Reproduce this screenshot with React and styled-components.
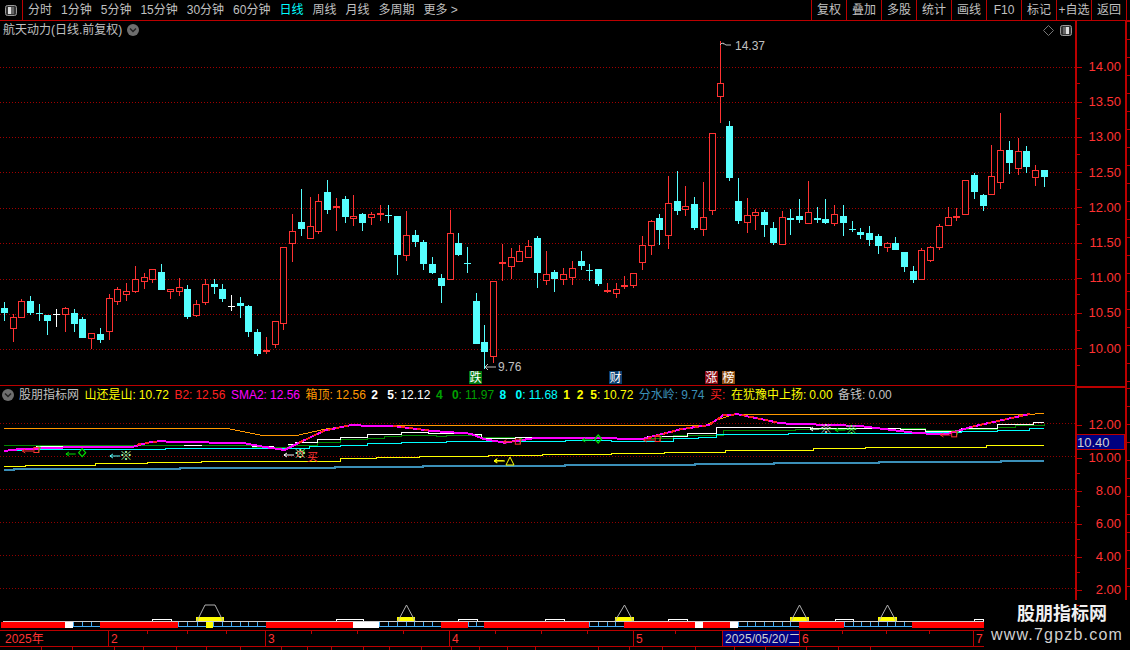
import styled, { createGlobalStyle } from "styled-components";

const FONT = `"Liberation Sans", "Noto Sans CJK SC", sans-serif`;
const RED = "#ff3232";
const LINE = "#bb0000";
const CYAN = "#55ffff";

const GlobalStyle = createGlobalStyle`
  html, body {
    margin: 0;
    background: #000;
    overflow: hidden;
  }
`;

const Page = styled.div`
  width: 1130px;
  height: 650px;
  display: flex;
  flex-direction: column;
  background: #000;
  color: #c0c0c0;
  font: 12px/1 ${FONT};
`;

//-------------Toolbar--------------
const Toolbar = styled.header`
  height: 20px;
  flex: none;
  display: flex;
  align-items: stretch;
  border-bottom: 1px solid ${LINE};
`;

const ToggleCell = styled.div`
  width: 22px;
  display: flex;
  align-items: center;
  justify-content: center;
  border-right: 1px solid ${LINE};
`;

const Tabs = styled.nav`
  display: flex;
  align-items: center;
  gap: 9px;
  padding-left: 5px;
`;

const Tab = styled.span`
  color: ${(p) => (p.$active ? "#00ffff" : "#c0c0c0")};
`;

const ToolGroup = styled.div`
  margin-left: auto;
  margin-right: 3px;
  display: flex;
  border-right: 1px solid ${LINE};
`;

const ToolButton = styled.div`
  width: 35px;
  box-sizing: border-box;
  display: flex;
  align-items: center;
  justify-content: center;
  border-left: 1px solid ${LINE};
  white-space: nowrap;
`;

//-------------Panes--------------
const Body = styled.div`
  height: 579px;
  flex: none;
  display: flex;
`;

const Charts = styled.div`
  width: 1075px;
  flex: none;
  display: flex;
  flex-direction: column;
`;

const UpperPane = styled.section`
  height: 365px;
  flex: none;
  border-bottom: 1px solid ${LINE};
  box-sizing: border-box;
`;

const LowerPane = styled.section`
  height: 214px;
  flex: none;
`;

const TitleBar = styled.div`
  height: 18px;
  display: flex;
  align-items: center;
  gap: 5px;
  padding: 0 3px;
`;

const TitleTools = styled.div`
  margin-left: auto;
  display: flex;
  align-items: center;
  gap: 6px;
`;

const Canvas = styled.svg`
  display: block;
  font-family: ${FONT};
  font-size: 12px;
`;

const Legend = styled.div`
  height: 17px;
  display: flex;
  align-items: center;
  gap: 5.5px;
  padding-left: 1.5px;
  white-space: nowrap;
`;

const LegendItem = styled.span`
  color: ${(p) => p.$color};
`;

const LegendDigits = styled.b`
  word-spacing: ${(p) => p.$spacing}px;
`;

const LegendValue = styled.span`
  margin-left: 3px;
`;

//-------------Axis--------------
const Axes = styled.div`
  flex: 1;
  display: flex;
  flex-direction: column;
`;

const Axis = styled.div`
  position: relative;
  width: 52px;
  box-sizing: border-box;
  height: ${(p) => p.$height}px;
  padding-top: ${(p) => p.$pad}px;
  border-left: 2px solid ${LINE};
  border-right: 2px solid ${LINE};
  border-top: ${(p) => (p.$lined ? `2px solid ${LINE}` : "none")};

  &::after {
    content: "";
    position: absolute;
    top: 0;
    bottom: 0;
    left: 100%;
    margin-left: 2px;
    width: 3px;
    background: repeating-linear-gradient(to bottom, ${LINE} 0 1px, transparent 1px 18px);
  }
`;

const AxisRow = styled.div`
  position: relative;
  height: ${(p) => p.$height}px;
  display: flex;
  align-items: center;
  justify-content: flex-end;
  padding-right: 4px;
  color: ${RED};
  font-size: 13px;

  &::before {
    content: "";
    position: absolute;
    left: 0;
    top: 50%;
    width: 5px;
    height: 1px;
    background: ${LINE};
  }

  &::after {
    content: "";
    position: absolute;
    left: 0;
    bottom: 0;
    width: 3px;
    height: 1px;
    background: ${LINE};
  }
`;

const PriceTag = styled.div`
  position: absolute;
  left: 0;
  right: 0;
  top: 46px;
  height: 16px;
  box-sizing: border-box;
  display: flex;
  align-items: center;
  background: #000080;
  border: 1px solid ${LINE};
  border-left: none;
  color: #d0d0d0;
  font-size: 13px;
`;

//-------------Bottom--------------
const Bottom = styled.div`
  height: 50px;
  flex: none;
  display: flex;
`;

const BottomLeft = styled.div`
  width: 984px;
  flex: none;
`;

const TimeAxis = styled.div`
  position: relative;
  height: 17px;
  box-sizing: border-box;
  display: flex;
  border-top: 1px solid ${LINE};
  border-bottom: 1px solid ${LINE};
`;

const TimeCell = styled.div`
  width: ${(p) => p.$width}px;
  box-sizing: border-box;
  flex: none;
  display: flex;
  align-items: center;
  padding-left: ${(p) => (p.$first ? 5 : 2)}px;
  border-left: ${(p) => (p.$first ? "none" : `1px solid ${LINE}`)};
  color: ${(p) => (p.$active ? "#d0d0d0" : RED)};
  background: ${(p) => (p.$active ? "#000080" : "transparent")};
  white-space: nowrap;
  overflow: hidden;
`;

const TimeTicks = styled.svg`
  position: absolute;
  left: 0;
  top: 0;
`;

const FooterTabs = styled.div`
  height: 3px;
  display: flex;
`;

const FooterTab = styled.div`
  width: ${(p) => p.$width}px;
  flex: none;
  box-sizing: border-box;
  border-right: 1px solid ${LINE};
`;

const Watermark = styled.div`
  flex: 1;
  display: flex;
  flex-direction: column;
  align-items: center;
  padding-top: 5px;
  gap: 4px;
`;

const WatermarkName = styled.div`
  margin-left: 10px;
  color: #f0f0f0;
  font-size: 18px;
  font-weight: 700;
`;

const WatermarkUrl = styled.div`
  color: #d0d0d0;
  font-size: 16px;
  letter-spacing: 1.2px;
`;

//-------------Data--------------
// [x, kind, top, bottom, high, low], read from 3x crops of the chart
const candleGroups = [
  {
    x0: 0, y0: 170, rows: [
      [13, "c", 414, 429, 396, 453], [40, "r", 441, 477, 432, 516], [64, "r", 393, 444, 387, 444],
      [91, "c", 393, 429, 378, 435], [118, "c", 430, 430, 402, 453], [142, "c", 435, 453, 435, 495],
      [169, "w", 433, 433, 417, 471], [196, "r", 414, 435, 411, 486], [223, "c", 429, 462, 417, 486],
      [247, "c", 447, 504, 441, 504], [274, "r", 489, 507, 489, 537], [301, "c", 492, 510, 474, 519],
      [328, "r", 384, 486, 372, 510], [352, "r", 357, 396, 351, 405], [379, "r", 363, 375, 339, 393],
      [406, "r", 327, 366, 288, 369], [433, "r", 321, 336, 309, 357], [457, "r", 297, 330, 297, 339],
      [484, "c", 306, 360, 282, 360], [511, "r", 357, 366, 357, 387], [538, "r", 351, 366, 324, 378],
      [562, "c", 357, 441, 345, 447], [589, "r", 402, 438, 390, 441], [616, "r", 342, 399, 327, 405],
      [643, "c", 342, 352, 327, 372], [667, "c", 357, 387, 342, 396], [694, "w", 409, 409, 375, 423],
      [721, "c", 399, 408, 381, 444], [745, "c", 408, 486, 405, 501], [772, "c", 486, 552, 477, 558],
      [799, "r", 540, 540, 501, 552], [826, "r", 453, 525, 453, 534],
    ],
  },
  {
    x0: 280, y0: 170, rows: [
      [10, "r", 231, 462, 231, 480], [37, "r", 183, 222, 132, 276], [64, "c", 156, 177, 57, 198],
      [91, "r", 168, 207, 81, 207], [115, "r", 93, 186, 72, 192], [142, "c", 66, 120, 30, 132],
      [169, "r", 109, 109, 84, 183], [196, "c", 87, 141, 78, 159], [220, "r", 138, 147, 75, 168],
      [247, "c", 132, 159, 129, 183], [274, "r", 132, 144, 126, 165], [301, "r", 129, 137, 105, 153],
      [325, "c", 136, 136, 105, 159], [352, "c", 138, 255, 138, 315], [379, "r", 195, 258, 123, 273],
      [406, "c", 195, 216, 180, 231], [430, "c", 216, 282, 210, 300], [457, "c", 282, 309, 261, 312],
      [484, "c", 324, 348, 312, 399], [511, "r", 189, 330, 120, 330], [535, "c", 219, 255, 189, 258],
      [562, "c", 280, 280, 231, 309], [589, "c", 393, 522, 369, 522], [613, "c", 516, 546, 465, 597],
      [640, "r", 333, 561, 333, 579], [667, "r", 278, 278, 222, 333], [694, "r", 261, 291, 234, 327],
      [718, "r", 243, 276, 225, 276], [745, "r", 228, 264, 210, 264], [772, "c", 204, 309, 198, 354],
      [799, "r", 312, 333, 243, 345], [823, "c", 306, 327, 300, 366],
    ],
  },
  {
    x0: 560, y0: 180, rows: [
      [10, "r", 282, 300, 264, 315], [37, "r", 264, 294, 243, 315], [64, "c", 243, 258, 213, 270],
      [88, "c", 271, 271, 252, 303], [115, "c", 267, 312, 267, 318], [142, "r", 330, 330, 309, 339],
      [169, "r", 327, 342, 309, 354], [193, "r", 315, 315, 288, 327], [220, "r", 279, 318, 279, 324],
      [247, "r", 195, 249, 168, 270], [274, "r", 123, 198, 120, 225], [298, "c", 114, 150, 102, 195],
      [325, "r", 69, 168, -12, 207], [352, "c", 63, 93, -27, 105], [376, "r", 78, 90, 18, 108],
      [403, "c", 72, 144, 51, 150], [430, "r", 111, 150, 6, 168], [457, "r", -141, 93, -141, 105],
      [481, "r", -291, -249, -417, -171], [508, "c", -162, -6, -177, 3], [535, "c", 63, 123, -6, 132],
      [562, "r", 105, 129, 54, 159], [586, "r", 96, 108, 87, 150], [613, "c", 96, 135, 90, 171],
      [640, "c", 144, 189, 126, 195], [667, "r", 111, 195, 93, 195], [691, "c", 114, 120, 87, 165],
      [718, "c", 108, 120, 57, 129], [745, "r", 96, 132, 3, 132], [772, "c", 114, 120, 81, 129],
      [796, "c", 117, 129, 57, 132], [823, "r", 102, 132, 75, 138],
    ],
  },
  {
    x0: 840, y0: 100, rows: [
      [10, "c", 348, 369, 315, 408], [37, "c", 388, 388, 363, 396], [61, "c", 396, 405, 384, 417],
      [88, "c", 399, 420, 378, 438], [115, "c", 408, 438, 402, 462], [142, "r", 430, 444, 426, 456],
      [166, "c", 429, 450, 411, 450], [193, "c", 456, 501, 456, 516], [220, "c", 513, 540, 498, 549],
      [244, "r", 450, 540, 444, 540], [271, "r", 441, 483, 438, 486], [298, "r", 378, 444, 372, 450],
      [325, "r", 351, 378, 321, 378], [349, "r", 349, 349, 324, 363], [376, "r", 240, 345, 240, 345],
      [403, "c", 225, 276, 219, 297], [430, "c", 285, 318, 282, 333], [454, "r", 228, 285, 135, 285],
      [481, "r", 150, 249, 39, 267], [508, "c", 150, 189, 123, 222], [535, "r", 153, 207, 114, 225],
      [559, "c", 153, 201, 138, 219], [586, "r", 210, 234, 195, 258], [613, "c", 210, 231, 210, 261],
    ],
  },
];

const candles = candleGroups.flatMap((g) =>
  g.rows.map(([x, kind, top, bottom, high, low]) => ({
    x: g.x0 + Math.floor(x / 3),
    kind,
    top: g.y0 + Math.floor(top / 3),
    bottom: g.y0 + Math.floor(bottom / 3),
    high: g.y0 + Math.floor(high / 3),
    low: g.y0 + Math.floor(low / 3),
  }))
);

const upperGrid = [67, 102, 137, 172, 208, 243, 279, 314, 349];
const lowerGrid = [423, 456, 489, 522, 555, 588];
const upperLabels = ["14.00", "13.50", "13.00", "12.50", "12.00", "11.50", "11.00", "10.50", "10.00"];
const lowerLabels = ["12.00", "10.00", "8.00", "6.00", "4.00", "2.00"];

// the wide crops of the lower pane come out at 2.775x across and 3x down
const wx = (x0, x) => x0 + x / 2.775;
const wy = (y) => 370 + y / 3;
const pts = (left, right) => [
  ...left.map(([x, y]) => [wx(0, x), wy(y)]),
  ...right.map(([x, y]) => [wx(565, x), wy(y)]),
];

const stepPath = (list) => {
  let d = `M${list[0][0]} ${Math.round(list[0][1]) + 0.5}`;
  for (let i = 1; i < list.length; i++) {
    d += ` H${list[i][0]} V${Math.round(list[i][1]) + 0.5}`;
  }
  return d;
};
const linePath = (list) => "M" + list.map(([x, y]) => `${x} ${y}`).join(" L");

const orange = pts(
  [[11, 175], [630, 175], [727, 196], [825, 196], [900, 178], [970, 166], [1568, 166]],
  [[0, 166], [390, 166], [420, 150], [470, 133], [1290, 133], [1330, 130]]
);
const magenta = pts(
  [[11, 243], [50, 238], [100, 236], [140, 233], [370, 230], [410, 218], [440, 214], [680, 220], [730, 230], [790, 240], [830, 218], [900, 182], [970, 166], [1090, 168], [1200, 183], [1305, 191], [1345, 208], [1400, 218], [1480, 205]],
  [[130, 205], [210, 208], [320, 178], [400, 165], [440, 135], [480, 133], [600, 160], [820, 168], [980, 190], [1060, 192], [1130, 170], [1290, 132]]
);
const redDash = [
  pts([[380, 224], [440, 214]], []),
  pts([[830, 218], [900, 182], [970, 166]], []),
  pts([[1090, 168], [1200, 183]], []),
  pts([], [[230, 205], [320, 178], [400, 165], [440, 135], [480, 133]]),
  pts([], [[490, 135], [600, 160]]),
  pts([], [[1130, 170], [1290, 132]]),
];
const whiteBits = [
  pts([[100, 228], [190, 228]], []),
  pts([[511, 225], [560, 225]], []),
  pts([[700, 230], [760, 230]], []),
];
const stepLines = [
  {
    color: "#008a00", width: 1,
    list: pts(
      [[11, 226], [700, 232], [800, 225], [880, 215], [945, 208], [1020, 203], [1066, 198], [1115, 196], [1212, 198], [1240, 196], [1335, 202]],
      [[0, 203], [200, 203], [300, 195], [440, 180], [640, 177], [800, 173], [1000, 181], [1100, 178], [1200, 170], [1250, 165], [1330, 160]]
    ),
  },
  {
    color: "#ffffff", width: 1,
    list: pts(
      [[800, 222], [820, 215], [880, 208], [945, 200], [1020, 193], [1115, 187], [1190, 190], [1305, 193], [1335, 205], [1430, 200]],
      [[0, 202], [130, 205], [230, 198], [340, 190], [420, 172], [470, 170], [680, 175], [830, 173], [930, 177], [1000, 183], [1100, 173], [1200, 163], [1300, 155], [1330, 155]]
    ),
  },
  {
    color: "#00ffff", width: 1,
    list: pts(
      [[11, 241], [60, 238], [460, 235], [860, 228], [945, 224], [1020, 220], [1115, 217], [1240, 212]],
      [[0, 211], [130, 212], [300, 205], [370, 200], [420, 193], [620, 188], [1000, 187], [1100, 184], [1200, 180], [1290, 175], [1330, 175]]
    ),
  },
  {
    color: "#ffff00", width: 1,
    list: pts(
      [[11, 287], [70, 284], [265, 280], [410, 277], [560, 274], [775, 272], [945, 265], [1045, 262], [1165, 259], [1355, 256], [1505, 253]],
      [[130, 250], [275, 246], [445, 241], [565, 239], [690, 235], [835, 232], [1050, 230], [1170, 226], [1300, 224], [1330, 224]]
    ),
  },
  {
    color: "#3b8fb8", width: 2,
    list: pts(
      [[11, 297], [40, 294], [500, 290], [930, 287], [1175, 284]],
      [[0, 283], [360, 280], [580, 276], [870, 273], [1210, 270], [1330, 270]]
    ),
  },
];

const boxes = [[101, 240, 0], [833, 252, 0], [1437, 215, 0], [257, 207, 565], [1080, 193, 565]];
const diamonds = [[228, 248, 0], [92, 207, 565]];
const arrows = [
  { x1: 62, x2: 92, y: 243, x0: 0, color: RED },
  { x1: 183, x2: 210, y: 252, x0: 0, color: "#00e000" },
  { x1: 305, x2: 333, y: 258, x0: 0, color: CYAN },
  { x1: 788, x2: 816, y: 255, x0: 0, color: "#ffffff" },
  { x1: 1372, x2: 1398, y: 272, x0: 0, color: "#ffff00" },
  { x1: 1397, x2: 1426, y: 215, x0: 0, color: RED },
  { x1: 48, x2: 78, y: 210, x0: 565, color: "#00e000" },
  { x1: 218, x2: 248, y: 210, x0: 565, color: RED },
  { x1: 680, x2: 705, y: 177, x0: 565, color: "#ffffff" },
  { x1: 750, x2: 778, y: 180, x0: 565, color: "#00e000" },
  { x1: 1042, x2: 1070, y: 195, x0: 565, color: RED },
];
const stars = [
  { x: 350, y: 255, x0: 0, color: "#b0ffb0" },
  { x: 833, y: 250, x0: 0, color: "#b0ffb0" },
  { x: 724, y: 175, x0: 565, color: "#d8d8d8" },
  { x: 795, y: 177, x0: 565, color: "#60ff60" },
];

const badges = [
  { x: 469, text: "跌", color: "#007a10" },
  { x: 609, text: "财", color: "#0b3f6f" },
  { x: 705, text: "涨", color: "#8a0a14" },
  { x: 722, text: "榜", color: "#8a4a10" },
];

const statusRuns = [
  ["red", 1, 65], ["white", 65, 73], ["grid", 73, 100], ["red", 100, 178], ["grid", 178, 206],
  ["yellow", 206, 213], ["grid", 213, 266], ["red", 266, 353], ["white", 353, 379], ["grid", 379, 441],
  ["red", 441, 468], ["grid", 468, 484], ["red", 484, 589], ["grid", 589, 624], ["red", 624, 695],
  ["white", 695, 703], ["red", 703, 730], ["white", 730, 738], ["grid", 738, 799], ["red", 799, 844],
  ["grid", 844, 912], ["red", 912, 984],
];
const statusBases = [[196, 224], [397, 415], [615, 634], [790, 809], [878, 897]];
const statusPeaks = [
  "197,621 205,605 215,605 223,621",
  "398,621 406.5,605 415,621",
  "615,621 624.5,605 633,621",
  "791,621 799.5,605 808,621",
  "879,621 887.5,605 896,621",
];
const statusFlags = [[152, 171], [336, 363], [458, 477], [545, 564], [668, 687], [835, 853], [974, 983]];

const timeCells = [
  { width: 108, text: "2025年", first: true },
  { width: 157, text: "2" },
  { width: 184, text: "3" },
  { width: 184, text: "4" },
  { width: 89, text: "5" },
  { width: 77, text: "2025/05/20/二", active: true },
  { width: 174, text: "6" },
  { width: 11, text: "7" },
];
const timeTicks = [147, 187, 226, 311, 357, 403, 495, 541, 587, 675, 842, 886, 929];
const footerTabs = [42, 31, 42, 29, 33, 30, 34, 41, 26, 24, 32, 26, 32, 30, 28, 28, 28, 63, 31, 33, 33, 39, 31, 41, 32, 32];

const periods = ["分时", "1分钟", "5分钟", "15分钟", "30分钟", "60分钟", "日线", "周线", "月线", "多周期", "更多 >"];
const tools = ["复权", "叠加", "多股", "统计", "画线", "F10", "标记", "+自选", "返回"];

const legend = [
  { color: "#ffff00", label: "山还是山:", value: "10.72" },
  { color: "#ff2020", label: "B2:", value: "12.56" },
  { color: "#ff00ff", label: "SMA2:", value: "12.56" },
  { color: "#ff9900", label: "箱顶:", value: "12.56" },
  { color: "#ffffff", digits: "2 5", spacing: 6, value: "12.12" },
  { color: "#00a000", digits: "4 0", spacing: 6, value: "11.97" },
  { color: "#00ffff", digits: "8 0", spacing: 6, value: "11.68" },
  { color: "#ffff00", digits: "1 2 5", spacing: 3.5, value: "10.72" },
  { color: "#3b8fb8", label: "分水岭:", value: "9.74" },
  { color: "#ff2020", label: "买:" },
  { color: "#ffff00", label: "在犹豫中上扬:", value: "0.00" },
  { color: "#c0c0c0", label: "备钱:", value: "0.00" },
];

//-------------Drawings--------------
function PanelToggle({ flip }) {
  return (
    <svg width="12" height="11" viewBox="0 0 12 11">
      <rect x="0.5" y="0.5" width="11" height="10" rx="2" fill="#333" stroke="#999" />
      <rect x={flip ? 6 : 3} y="2" width="3" height="7" fill="#ddd" />
      <rect x={flip ? 3 : 6} y="2" width="3" height="7" fill="#666" />
    </svg>
  );
}

function DownBadge() {
  return (
    <svg width="12" height="12" viewBox="0 0 12 12">
      <circle cx="6" cy="6" r="6" fill="#6e6e6e" />
      <path d="M3 4.5 L6 7.5 L9 4.5" fill="none" stroke="#222" strokeWidth="1.5" />
    </svg>
  );
}

function Candle({ x, kind, top, bottom, high, low }) {
  const color = kind === "r" ? RED : kind === "w" ? "#ffffff" : CYAN;
  const flat = top === bottom;
  return (
    <g>
      <rect x={x} y={high} width="1" height={Math.max(low - high, 1)} fill={color} />
      {flat ? (
        <rect x={x - 3} y={top} width="7" height={kind === "r" ? 2 : 1} fill={color} />
      ) : kind === "r" ? (
        <rect x={x - 2.5} y={top + 0.5} width="6" height={bottom - top - 1} fill="#000" stroke={color} />
      ) : (
        <rect x={x - 3} y={top} width="7" height={bottom - top} fill={color} />
      )}
    </g>
  );
}

function UpperChart() {
  return (
    <Canvas width="1075" height="346" viewBox="0 39 1075 346">
      {upperGrid.map((y) => (
        <line key={y} x1="0" x2="1075" y1={y + 0.5} y2={y + 0.5} stroke="#a00000" strokeDasharray="1 2" />
      ))}
      <g shapeRendering="crispEdges">
        {candles.map((c, i) => (
          <Candle key={i} {...c} />
        ))}
      </g>
      <path d="M720 45 L722 43 L724 44 M723 43 L726 45 L731 45" fill="none" stroke="#c0c0c0" />
      <text x="735" y="50" fill="#c0c0c0">14.37</text>
      <path d="M485 367 H496 M488 364 L485 367 L488 370" fill="none" stroke="#c0c0c0" />
      <text x="498" y="371" fill="#c0c0c0">9.76</text>
      {badges.map((b) => (
        <g key={b.x}>
          <rect x={b.x} y="371" width="13" height="13" fill={b.color} />
          <text x={b.x + 0.5} y="382" fill="#fff">{b.text}</text>
        </g>
      ))}
    </Canvas>
  );
}

function LowerChart() {
  return (
    <Canvas width="1075" height="197" viewBox="0 403 1075 197">
      {lowerGrid.map((y) => (
        <line key={y} x1="0" x2="1075" y1={y + 0.5} y2={y + 0.5} stroke="#900000" strokeDasharray="1 2" />
      ))}
      {stepLines.map((s) => (
        <path key={s.color} d={stepPath(s.list)} fill="none" stroke={s.color} strokeWidth={s.width} shapeRendering="crispEdges" />
      ))}
      {whiteBits.map((list, i) => (
        <path key={i} d={linePath(list)} fill="none" stroke="#fff" shapeRendering="crispEdges" />
      ))}
      <path d={linePath(orange)} fill="none" stroke="#ff9900" shapeRendering="crispEdges" />
      <path d={linePath(magenta)} fill="none" stroke="#ff00ff" strokeWidth="2" shapeRendering="crispEdges" />
      {redDash.map((list, i) => (
        <path key={i} d={linePath(list)} fill="none" stroke="#ff2020" strokeWidth="2" strokeDasharray="4 4" shapeRendering="crispEdges" />
      ))}
      {arrows.map((a, i) => {
        const x1 = wx(a.x0, a.x1);
        const x2 = wx(a.x0, a.x2);
        const y = wy(a.y);
        return (
          <path key={i} d={`M${x1} ${y} H${x2} M${x1 + 3} ${y - 2} L${x1} ${y} L${x1 + 3} ${y + 2}`} fill="none" stroke={a.color} />
        );
      })}
      {boxes.map(([x, y, x0], i) => (
        <g key={i}>
          <path d={`M${wx(x0, x) + 1} ${wy(y) - 3} L${wx(x0, x) + 4} ${wy(y) - 3} L${wx(x0, x) + 2} ${wy(y) + 2}`} fill="none" stroke="#00e000" />
          <rect x={wx(x0, x) - 2.5} y={wy(y) - 2.5} width="5" height="5" fill="none" stroke={RED} />
        </g>
      ))}
      {diamonds.map(([x, y, x0], i) => {
        const cx = wx(x0, x);
        const cy = wy(y);
        return (
          <path key={i} d={`M${cx} ${cy - 4} L${cx + 3.5} ${cy} L${cx} ${cy + 4} L${cx - 3.5} ${cy} Z`} fill="none" stroke="#00e000" strokeWidth="1.2" />
        );
      })}
      {stars.map((s, i) => (
        <text key={i} x={wx(s.x0, s.x)} y={wy(s.y) + 5} fill={s.color} fontWeight="700" textAnchor="middle" fontSize="13">※</text>
      ))}
      <text x="307" y="461" fill={RED} fontSize="11">买</text>
      <path d="M506 465 L510 457 L514 465 Z" fill="none" stroke="#ffff00" />
      <path d="M494 461 H505 M497 459 L494 461 L497 463" fill="none" stroke="#ffff00" />
    </Canvas>
  );
}

function StatusStrip() {
  return (
    <Canvas width="984" height="30" viewBox="0 600 984 30">
      <g shapeRendering="crispEdges">
        {statusRuns.map(([kind, from, to]) => {
          if (kind !== "grid") {
            const fill = kind === "red" ? "#ff0000" : kind === "white" ? "#ffffff" : "#ffff00";
            return <rect key={from} x={from} y="622" width={to - from} height="5.5" fill={fill} />;
          }
          const n = Math.max(Math.round((to - from) / 9), 1);
          const edges = Array.from({ length: n + 1 }, (_, i) => Math.round(from + ((to - from) / n) * i) + 0.5);
          return edges.slice(0, -1).map((x, i) => (
            <rect key={`${from}-${i}`} x={x} y="621.5" width={edges[i + 1] - x} height="5" fill="#000" stroke="#45aef5" />
          ));
        })}
        <rect x="3" y="621" width="981" height="1" fill="#cfcfcf" />
        {statusBases.map(([from, to]) => (
          <rect key={from} x={from} y="617" width={to - from} height="4" fill="#ffff00" />
        ))}
        {statusFlags.map(([from, to]) => (
          <path key={from} d={`M${from + 0.5} 621 V619.5 H${to + 0.5} V621`} fill="none" stroke="#fff" />
        ))}
      </g>
      {statusPeaks.map((p) => (
        <polyline key={p} points={p} fill="none" stroke="#b0b0b0" />
      ))}
    </Canvas>
  );
}

function App() {
  return (
    <>
      <GlobalStyle />
      <Page>
        <Toolbar>
          <ToggleCell>
            <PanelToggle />
          </ToggleCell>
          <Tabs>
            {periods.map((p) => (
              <Tab key={p} $active={p === "日线"}>{p}</Tab>
            ))}
          </Tabs>
          <ToolGroup>
            {tools.map((t) => (
              <ToolButton key={t}>{t}</ToolButton>
            ))}
          </ToolGroup>
        </Toolbar>

        <Body>
          <Charts>
            <UpperPane>
              <TitleBar>
                <span>航天动力(日线.前复权)</span>
                <DownBadge />
                <TitleTools>
                  <svg width="11" height="11" viewBox="0 0 11 11">
                    <path d="M5.5 0.5 L10.5 5.5 L5.5 10.5 L0.5 5.5 Z" fill="none" stroke="#777" />
                  </svg>
                  <PanelToggle flip />
                </TitleTools>
              </TitleBar>
              <UpperChart />
            </UpperPane>
            <LowerPane>
              <Legend>
                <DownBadge />
                <span>股朋指标网</span>
                {legend.map((item, i) => (
                  <LegendItem key={i} $color={item.color}>
                    {item.label}
                    {item.digits && <LegendDigits $spacing={item.spacing}>{item.digits}</LegendDigits>}
                    {item.digits && ":"}
                    {item.value && <LegendValue>{item.value}</LegendValue>}
                  </LegendItem>
                ))}
              </Legend>
              <LowerChart />
            </LowerPane>
          </Charts>
          <Axes>
            <Axis $height={365} $pad={28}>
              {upperLabels.map((l) => (
                <AxisRow key={l} $height={35.2}>{l}</AxisRow>
              ))}
            </Axis>
            <Axis $height={214} $pad={20} $lined>
              {lowerLabels.map((l) => (
                <AxisRow key={l} $height={33}>{l}</AxisRow>
              ))}
              <PriceTag>10.40</PriceTag>
            </Axis>
          </Axes>
        </Body>

        <Bottom>
          <BottomLeft>
            <StatusStrip />
            <TimeAxis>
              {timeCells.map((c) => (
                <TimeCell key={c.text} $width={c.width} $first={c.first} $active={c.active}>
                  {c.text}
                </TimeCell>
              ))}
              <TimeTicks width="984" height="4">
                {timeTicks.map((x) => (
                  <rect key={x} x={x} y="0" width="1" height="3" fill={LINE} />
                ))}
              </TimeTicks>
            </TimeAxis>
            <FooterTabs>
              {footerTabs.map((w, i) => (
                <FooterTab key={i} $width={w} />
              ))}
            </FooterTabs>
          </BottomLeft>
          <Watermark>
            <WatermarkName>股朋指标网</WatermarkName>
            <WatermarkUrl>www.7gpzb.com</WatermarkUrl>
          </Watermark>
        </Bottom>
      </Page>
    </>
  );
}

export default App;
